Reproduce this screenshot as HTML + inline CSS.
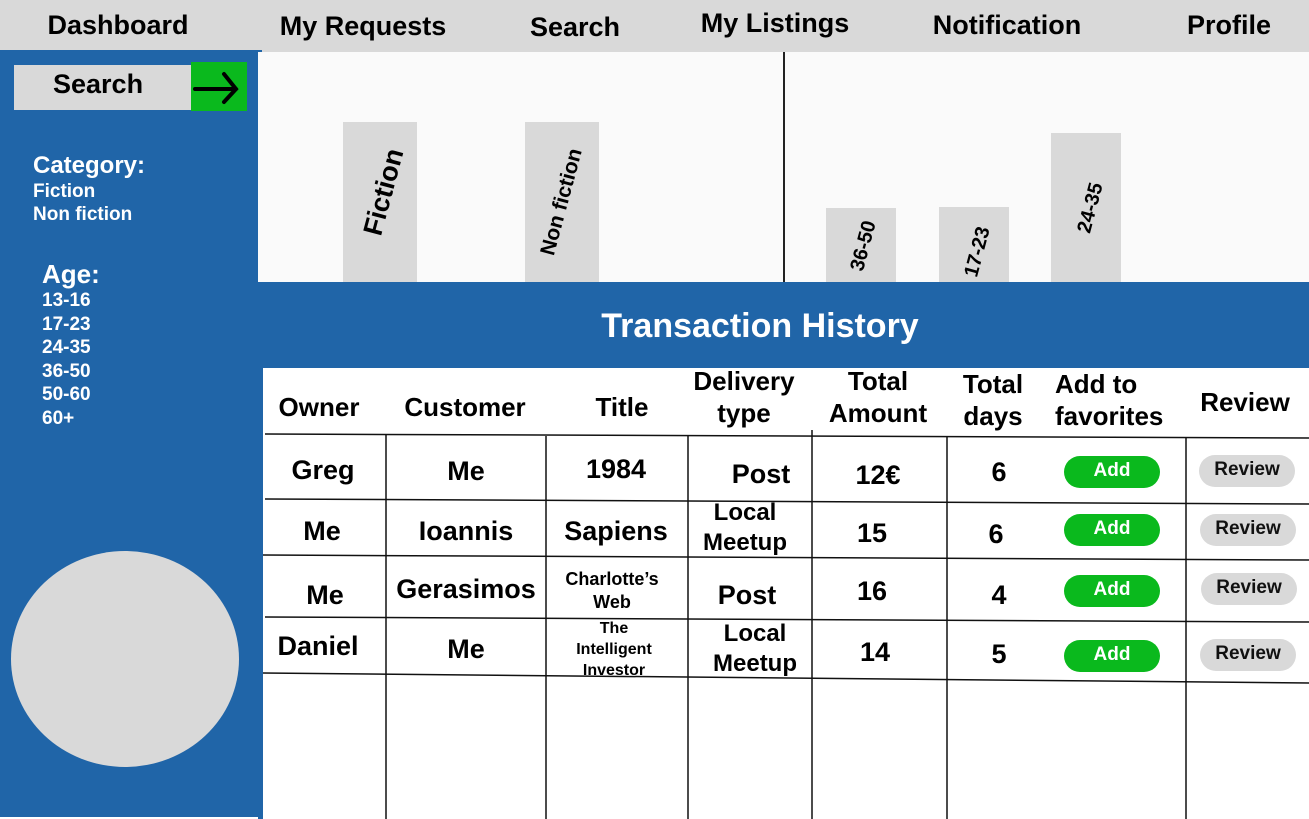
<!DOCTYPE html>
<html><head><meta charset="utf-8"><style>
*{margin:0;padding:0;box-sizing:border-box}
body{width:1309px;height:819px;position:relative;background:#fff;font-family:"Liberation Sans",sans-serif;font-weight:bold;overflow:hidden}
.a{position:absolute;white-space:nowrap}
.c{transform:translateX(-50%);text-align:center}
.nav{font-size:27px;color:#000;top:10px}
.sb{color:#fff}
.bar{position:absolute;background:#d9d9d9}
.rot{position:absolute;transform:translate(-50%,-50%) rotate(-75deg);font-size:20px;white-space:nowrap}
.h{font-size:26px;line-height:32px}
.d{font-size:27px}
.btn{position:absolute;width:96px;height:32px;border-radius:16px;font-size:19px;text-align:center;line-height:30px}
.g{background:#0ab91d;color:#fff}
.r{background:#d9d9d9;color:#111}
</style></head><body>
<div class="a" style="left:0;top:0;width:1309px;height:52px;background:#d9d9d9"></div>
<div class="a nav c" style="left:118px">Dashboard</div>
<div class="a nav c" style="left:363px;top:11px">My Requests</div>
<div class="a nav c" style="left:575px;top:12px">Search</div>
<div class="a nav c" style="left:775px;top:8px">My Listings</div>
<div class="a nav c" style="left:1007px">Notification</div>
<div class="a nav c" style="left:1229px">Profile</div>

<div class="a" style="left:0;top:50px;width:262px;height:767px;background:#2065a8"></div>
<div class="a" style="left:14px;top:65px;width:177px;height:45px;background:#d9d9d9"></div>
<div class="a" style="left:53px;top:69px;font-size:27px">Search</div>
<div class="a" style="left:191px;top:62px;width:56px;height:49px;background:#0ab91d"></div>
<svg class="a" style="left:191px;top:62px" width="56" height="49"><path d="M4 27 H45 M33 12 L45 27 L33 40" stroke="#000" stroke-width="4" fill="none" stroke-linecap="round"/></svg>
<div class="a sb" style="left:33px;top:152px;font-size:24px">Category:</div>
<div class="a sb" style="left:33px;top:181px;font-size:19px">Fiction</div>
<div class="a sb" style="left:33px;top:204px;font-size:19px">Non fiction</div>
<div class="a sb" style="left:42px;top:259px;font-size:26px">Age:</div>
<div class="a sb" style="left:42px;top:289px;font-size:19px;line-height:23.6px">13-16<br>17-23<br>24-35<br>36-50<br>50-60<br>60+</div>
<div class="a" style="left:11px;top:551px;width:228px;height:216px;border-radius:50%;background:#d9d9d9"></div>

<div class="a" style="left:258px;top:52px;width:1051px;height:230px;background:#fafafa"></div>
<div class="a" style="left:783px;top:52px;width:2px;height:230px;background:#222"></div>
<div class="bar" style="left:343px;top:122px;width:74px;height:160px"></div>
<div class="bar" style="left:525px;top:122px;width:74px;height:160px"></div>
<div class="bar" style="left:826px;top:208px;width:70px;height:74px"></div>
<div class="bar" style="left:939px;top:207px;width:70px;height:75px"></div>
<div class="bar" style="left:1051px;top:133px;width:70px;height:149px"></div>
<div class="rot" style="left:384px;top:192px;font-size:27px">Fiction</div>
<div class="rot" style="left:562px;top:202px;font-size:21px">Non fiction</div>
<div class="rot" style="left:864px;top:246px">36-50</div>
<div class="rot" style="left:978px;top:252px">17-23</div>
<div class="rot" style="left:1091px;top:208px">24-35</div>

<div class="a" style="left:258px;top:282px;width:1051px;height:86px;background:#2065a8"></div>
<div class="a c" style="left:760px;top:307px;font-size:34px;color:#fff">Transaction History</div>
<div class="a" style="left:258px;top:368px;width:5px;height:451px;background:#2065a8"></div>

<svg class="a" style="left:0;top:0" width="1309" height="819">
<g stroke="#111" stroke-width="1.5">
<line x1="265" y1="434" x2="1309" y2="438"/>
<line x1="265" y1="499" x2="1309" y2="504"/>
<line x1="263" y1="555" x2="1309" y2="560"/>
<line x1="265" y1="617" x2="1309" y2="622"/>
<line x1="263" y1="673" x2="1309" y2="683"/>
<line x1="386" y1="434" x2="386" y2="819"/>
<line x1="546" y1="436" x2="546" y2="819"/>
<line x1="688" y1="436" x2="688" y2="819"/>
<line x1="812" y1="430" x2="812" y2="819"/>
<line x1="947" y1="437" x2="947" y2="819"/>
<line x1="1186" y1="437" x2="1186" y2="819"/>
</g></svg>

<div class="a h c" style="left:319px;top:391px">Owner</div>
<div class="a h c" style="left:465px;top:391px">Customer</div>
<div class="a h c" style="left:622px;top:391px">Title</div>
<div class="a h c" style="left:744px;top:365px">Delivery<br>type</div>
<div class="a h c" style="left:878px;top:365px">Total<br>Amount</div>
<div class="a h c" style="left:993px;top:368px">Total<br>days</div>
<div class="a h" style="left:1055px;top:368px">Add to<br>favorites</div>
<div class="a h c" style="left:1245px;top:386px">Review</div>

<div class="a d c" style="left:323px;top:455px">Greg</div>
<div class="a d c" style="left:466px;top:456px">Me</div>
<div class="a d c" style="left:616px;top:454px">1984</div>
<div class="a d c" style="left:761px;top:459px">Post</div>
<div class="a d c" style="left:878px;top:460px">12€</div>
<div class="a d c" style="left:999px;top:457px">6</div>

<div class="a d c" style="left:322px;top:516px">Me</div>
<div class="a d c" style="left:466px;top:516px">Ioannis</div>
<div class="a d c" style="left:616px;top:516px">Sapiens</div>
<div class="a c" style="left:745px;top:498px;font-size:24px;line-height:30px">Local<br>Meetup</div>
<div class="a d c" style="left:872px;top:518px">15</div>
<div class="a d c" style="left:996px;top:519px">6</div>

<div class="a d c" style="left:325px;top:580px">Me</div>
<div class="a d c" style="left:466px;top:574px">Gerasimos</div>
<div class="a c" style="left:612px;top:568px;font-size:18px;line-height:23px">Charlotte’s<br>Web</div>
<div class="a d c" style="left:747px;top:580px">Post</div>
<div class="a d c" style="left:872px;top:576px">16</div>
<div class="a d c" style="left:999px;top:580px">4</div>

<div class="a d c" style="left:318px;top:631px">Daniel</div>
<div class="a d c" style="left:466px;top:634px">Me</div>
<div class="a c" style="left:614px;top:618px;font-size:16px;line-height:21px">The<br>Intelligent<br>Investor</div>
<div class="a c" style="left:755px;top:619px;font-size:24px;line-height:30px">Local<br>Meetup</div>
<div class="a d c" style="left:875px;top:637px">14</div>
<div class="a d c" style="left:999px;top:639px">5</div>

<div class="btn g" style="left:1064px;top:456px">Add</div>
<div class="btn g" style="left:1064px;top:514px">Add</div>
<div class="btn g" style="left:1064px;top:575px">Add</div>
<div class="btn g" style="left:1064px;top:640px">Add</div>
<div class="btn r" style="left:1199px;top:455px">Review</div>
<div class="btn r" style="left:1200px;top:514px">Review</div>
<div class="btn r" style="left:1201px;top:573px">Review</div>
<div class="btn r" style="left:1200px;top:639px">Review</div>
</body></html>
